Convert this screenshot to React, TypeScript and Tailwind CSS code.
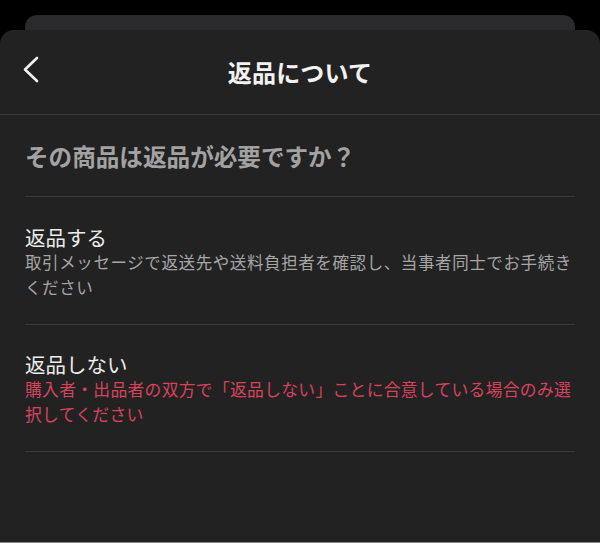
import React from "react";

const jp = { fontFamily: '"Noto Sans CJK JP", "Noto Sans", sans-serif' };

function BackChevron() {
  return (
    <svg width="16" height="28" viewBox="0 0 16 28" fill="none" className="block">
      <polyline
        points="14,2 2,13.5 14,25"
        stroke="#f2f2f2"
        strokeWidth="2.6"
        strokeLinecap="round"
        strokeLinejoin="round"
      />
    </svg>
  );
}

function ReturnOption({
  title,
  note,
  noteCls,
  pt,
}: {
  title: string;
  note: string;
  noteCls: string;
  pt: string;
}) {
  return (
    <div className={`${pt} pb-[24px] border-b border-[#3a3a3a]`}>
      <div className="text-[20.5px] leading-[26px] text-[#ececec]">{title}</div>
      <p className={noteCls}>{note}</p>
    </div>
  );
}

export default function App() {
  return (
    <div
      className="h-[543px] w-full bg-black overflow-hidden flex flex-col border-b border-[#8a8a8a]"
      style={jp}
    >
      {/* sheet stacked behind */}
      <div className="mx-[25px] mt-[15px] h-[15px] shrink-0 rounded-t-[12px] bg-[#2a2a2c]" />

      {/* main sheet */}
      <div className="flex-1 rounded-t-[14px] bg-[#222222]">
        <div className="grid grid-cols-[80px_1fr_80px] items-center h-[85px] border-b border-[#3a3a3a]">
          <div className="pl-[23px] -mt-[4px]">
            <BackChevron />
          </div>
          <h1 className="text-center text-[24px] font-semibold text-[#f2f2f2] tracking-[0.2px]">
            返品について
          </h1>
          <div />
        </div>

        <div className="px-[25px]">
          <div className="pt-[25px] pb-[24px] border-b border-[#3a3a3a]">
            <h2 className="text-[23.6px] leading-[32px] font-bold text-[#a2a2a2]">
              その商品は返品が必要ですか？
            </h2>
          </div>

          <ReturnOption
            pt="pt-[27px]"
            title="返品する"
            note="取引メッセージで返送先や送料負担者を確認し、当事者同士でお手続きください"
            noteCls="text-[16.5px] leading-[25px] tracking-[0.6px] text-[#a6a6a6]"
          />

          <ReturnOption
            pt="pt-[26px]"
            title="返品しない"
            note="購入者・出品者の双方で「返品しない」ことに合意している場合のみ選択してください"
            noteCls="text-[16.8px] leading-[25px] tracking-[0.3px] text-[#d8435c]"
          />
        </div>
      </div>
    </div>
  );
}
